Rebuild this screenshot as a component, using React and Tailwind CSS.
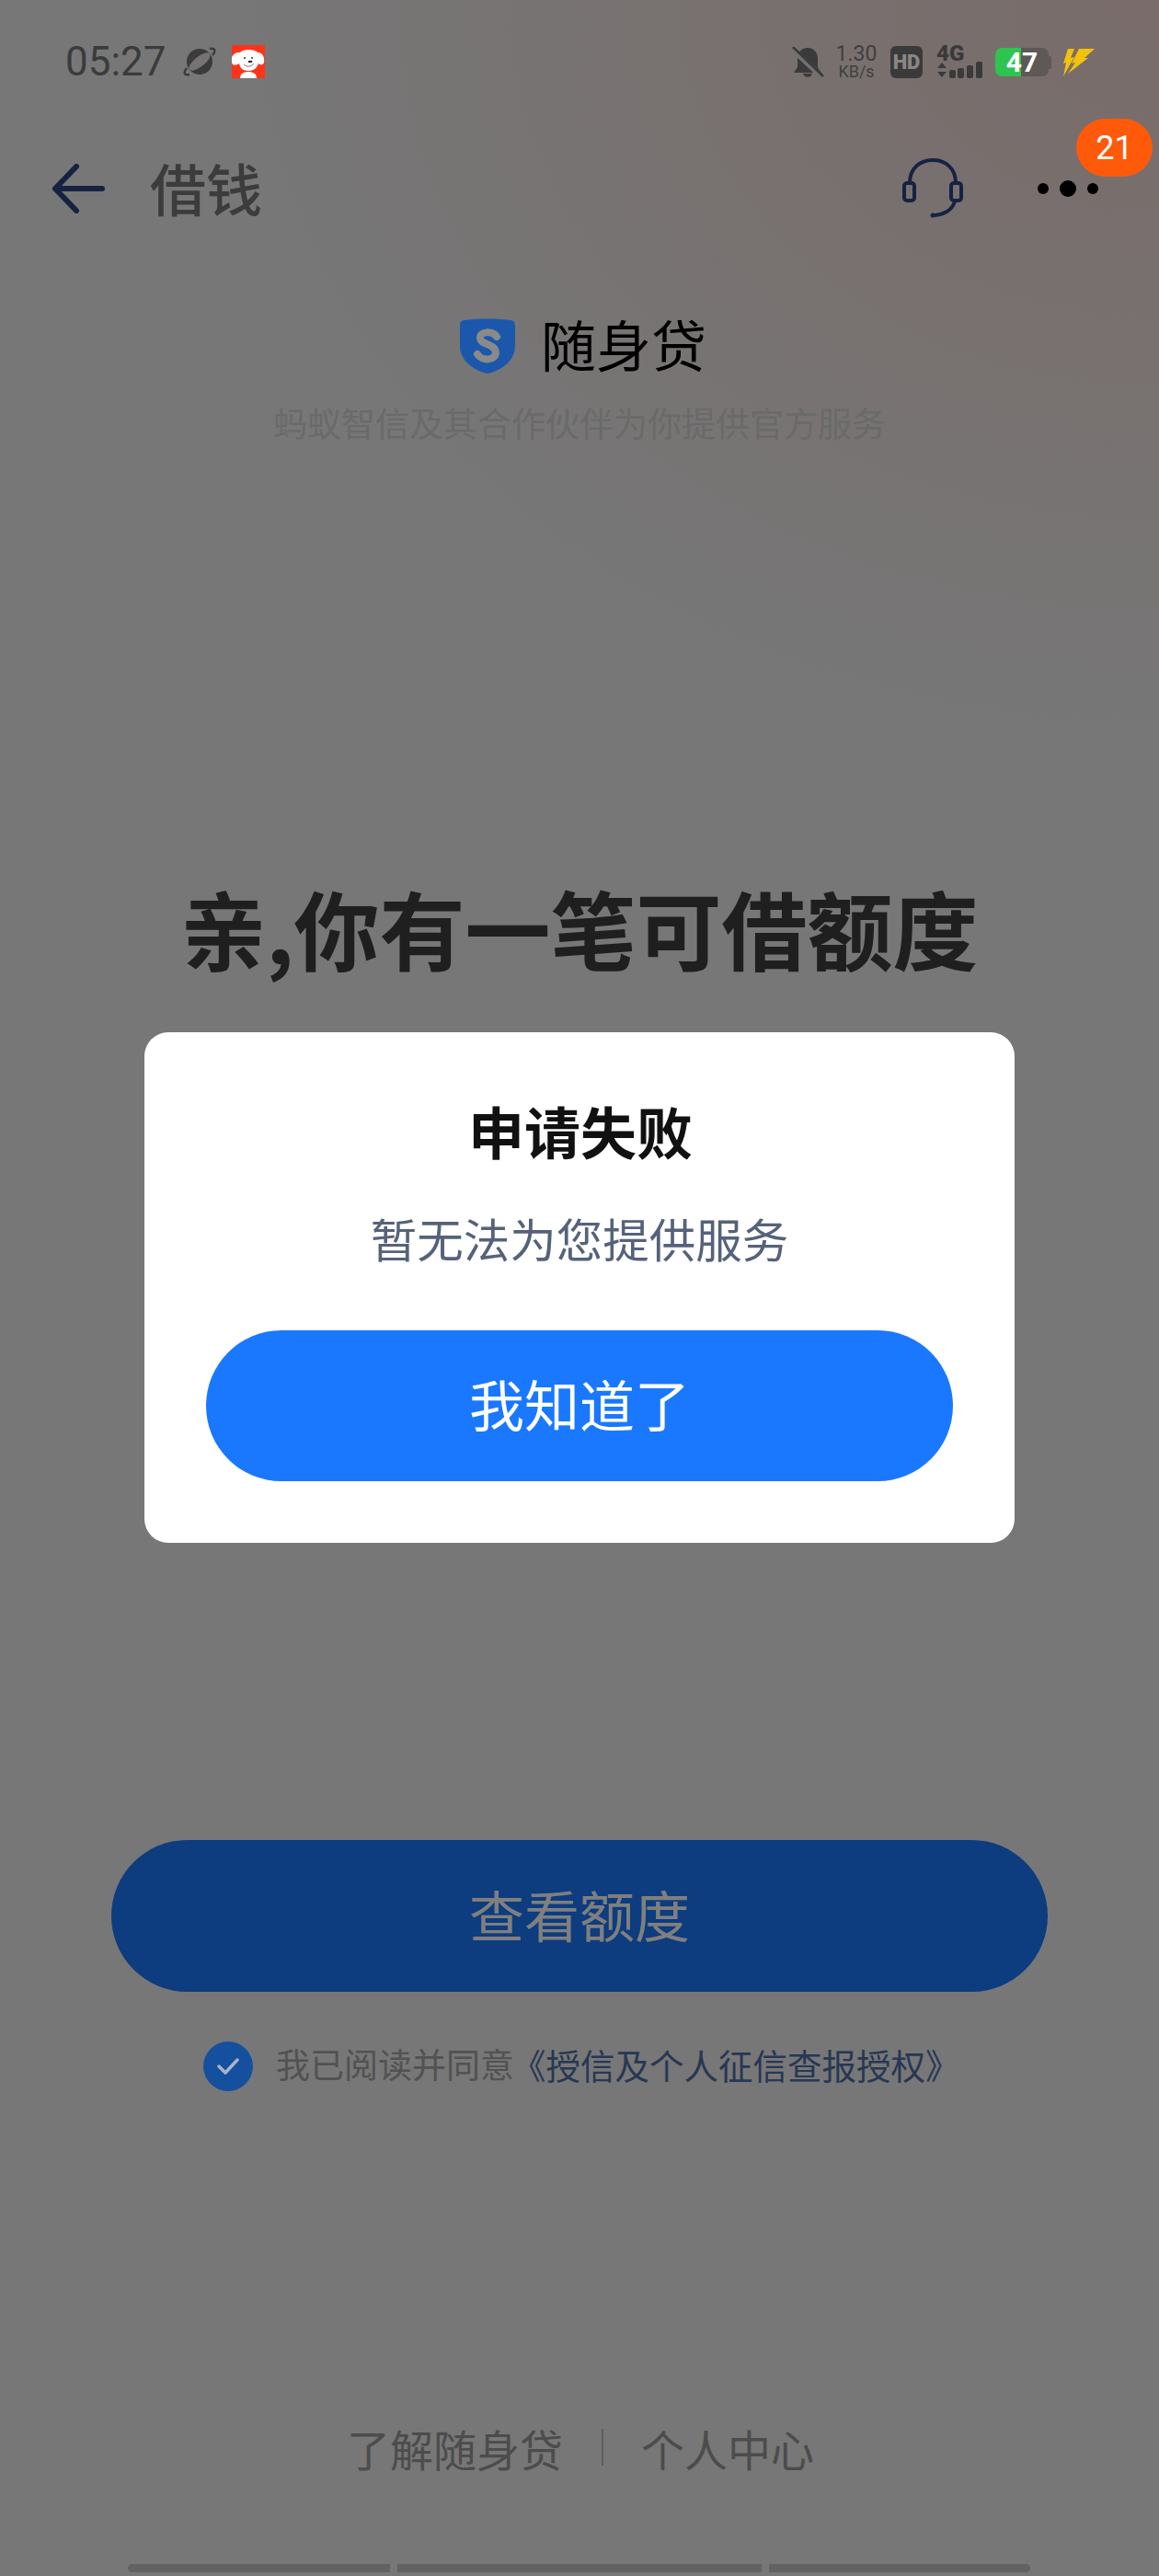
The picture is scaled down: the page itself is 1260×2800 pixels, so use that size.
import React from 'react';

const cjk = "font-['Noto_Sans_CJK_SC','Noto_Sans',sans-serif]";

function StatusBar() {
  return (
    <div className="relative z-20 flex h-[134px] items-start justify-between pt-[49px] pl-[71px] pr-[70px]">
      <div className="flex items-center">
        <span className="font-['Roboto',sans-serif] text-[44px] leading-[36px] text-[#3b3b3b]">05:27</span>
        {/* planet */}
        <svg className="ml-[18px]" width="36" height="32" viewBox="0 0 36 32">
          <circle cx="18" cy="16" r="14" fill="#3b3b3b" />
          <ellipse cx="18" cy="16" rx="14" ry="5.5" transform="rotate(-38 18 16)" fill="#777372" />
          <path d="M4 23 C0 28 1 31 7 30 M32 9 C36 4 35 1 29 2" fill="none" stroke="#3b3b3b" strokeWidth="2.5" />
        </svg>
        {/* red dog */}
        <svg className="ml-[17px]" width="36" height="36" viewBox="0 0 36 36">
          <rect width="36" height="36" fill="#ff3319" />
          <path d="M9 36 C9 31 13 29 18 29 C23 29 27 31 27 36 Z" fill="#fff" />
          <path d="M0 13 C3 8 6 8 9 8 C12 4 25 4 28 8 C32 8 36 11 35 19 C34 22 31 22 29 20 C27 26 23 28 18 28 C12 28 9 25 8 20 C5 22 1 23 0 19 Z" fill="#fff" />
          <circle cx="14" cy="14" r="1" fill="#333" />
          <circle cx="22" cy="14" r="1" fill="#333" />
          <ellipse cx="20" cy="18" rx="2.5" ry="1.2" fill="#333" />
          <path d="M13 21 C16 24 21 24 24 20" fill="none" stroke="#555" strokeWidth="0.8" />
        </svg>
      </div>
      <div className="flex items-center">
        {/* muted bell */}
        <svg width="36" height="34" viewBox="0 0 36 34">
          <path d="M18 1 C25 1 29 6 29 13 L29 22 L33 28 L3 28 L7 22 L7 13 C7 6 11 1 18 1 Z" fill="#3a3a3a" />
          <path d="M13 29 C14 34 22 34 23 29 Z" fill="#3a3a3a" />
          <path d="M1 2 L34 33" stroke="#757070" strokeWidth="6" />
          <path d="M2 0 L35 32" stroke="#3a3a3a" strokeWidth="2.5" />
        </svg>
        <div className="ml-[13px] flex w-[44px] flex-col items-center font-['Roboto',sans-serif] text-[#3f3f3f]">
          <span className="text-[23px] leading-[19px]">1.30</span>
          <span className="mt-[2px] whitespace-nowrap text-[18px] leading-[16px]">KB/s</span>
        </div>
        <div className="ml-[15px] flex h-[35px] w-[35px] items-center justify-center rounded-[6px] bg-[#3a3a3a] font-['Roboto',sans-serif] text-[22px] font-black leading-none text-[#8a8685]">HD</div>
        <div className="ml-[15px] flex w-[51px] flex-col">
          <span className="font-['Roboto',sans-serif] text-[24px] font-black leading-[17px] text-[#3a3a3a]">4G</span>
          <svg width="51" height="18" viewBox="0 0 51 18">
            <path d="M1 7 L6 1 L11 7 Z M1 11 L11 11 L6 17 Z" fill="#3a3a3a" />
            <rect x="14" y="9" width="7" height="9" rx="2" fill="#3a3a3a" />
            <rect x="23" y="7" width="7" height="11" rx="2" fill="#3a3a3a" />
            <rect x="33" y="4" width="7" height="14" rx="2" fill="#3a3a3a" />
            <rect x="43" y="0" width="7" height="18" rx="2" fill="#3a3a3a" />
          </svg>
        </div>
        <div className="relative ml-[13px] flex h-[31px] w-[58px] items-center justify-center rounded-[7px] bg-[#5e5856]">
          <div className="absolute inset-y-0 left-0 w-[28px] rounded-l-[7px] bg-[#2fc44f]" />
          <span className="relative font-['Roboto',sans-serif] text-[30px] font-bold leading-none text-white">47</span>
        </div>
        <div className="h-[14px] w-[3px] rounded-r-[2px] bg-[#5e5856]" />
        {/* charging bolts */}
        <svg className="ml-[12px]" width="35" height="32" viewBox="0 0 35 32">
          <path d="M6 1 L13 1 L9 11 L13 10 L1 31 L4 16 L1 17 Z" fill="#f2c20c" />
          <path d="M18 1 L35 1 L24 11 L28 11 L6 28 L14 16 L10 17 Z" fill="#f2c20c" />
        </svg>
      </div>
    </div>
  );
}

function NavBar() {
  return (
    <div className="relative flex h-[142px] items-center pl-[56px] pr-[66px]">
      <svg width="58" height="54" viewBox="0 0 58 54" fill="none" stroke="#2c4484" strokeWidth="6" strokeLinecap="round" strokeLinejoin="round">
        <path d="M55 27 L4 27 M27 3 L4 27 L27 51" />
      </svg>
      <span className={`${cjk} ml-[49px] pb-[4px] text-[61px] font-medium leading-none text-[#787878]`}>借钱</span>
      <svg className="ml-auto" width="66" height="66" viewBox="0 0 66 66" fill="none" stroke="#2c4484" strokeWidth="4" strokeLinecap="round">
        <path d="M8 27 C8 10 20 2 33 2 C46 2 58 10 58 27" />
        <rect x="2" y="27" width="11" height="19" rx="3" />
        <rect x="53" y="27" width="11" height="19" rx="3" />
        <path d="M57 47 C54 57 44 62 33 62" />
        <circle cx="33" cy="62" r="2.5" fill="#2c4484" stroke="none" />
      </svg>
      <div className="ml-[81px] flex items-center gap-[12px]">
        <span className="h-[12px] w-[12px] rounded-full bg-black" />
        <span className="h-[18px] w-[18px] rounded-full bg-black" />
        <span className="h-[12px] w-[12px] rounded-full bg-black" />
      </div>
      <div className="absolute right-[7px] top-[-5px] z-20 flex h-[63px] w-[83px] items-center justify-center rounded-full bg-[#ff5a0a] font-['Roboto',sans-serif] text-[36px] leading-none text-white">21</div>
    </div>
  );
}

export default function App() {
  return (
    <div className={`${cjk} relative h-[2800px] w-[1260px] overflow-hidden bg-[#eeeeee] bg-[radial-gradient(ellipse_1000px_800px_at_top_right,#f2d8d4_0%,#eeeeee_100%)]`}>
      <StatusBar />
      <NavBar />

      <div className="mt-[70px] flex h-[60px] items-center pl-[499px]">
        <svg className="relative z-20" width="62" height="60" viewBox="0 0 62 60">
          <path d="M1 8 C1 4 3 2 7 2 C20 0 42 0 55 2 C59 2 61 4 61 8 L61 30 C61 46 46 57 31 60 C16 57 1 46 1 30 Z" fill="#1b58ac" />
          <path d="M41 20 C36 13 22 14 23 22 C24 29 39 27 40 37 C40 46 25 47 20 39" fill="none" stroke="#8a8a8a" strokeWidth="8" strokeLinecap="round" />
        </svg>
        <span className="ml-[27px] pb-[6px] text-[60px] leading-none text-black">随身贷</span>
      </div>
      <p className="mt-[30px] text-center text-[37px] leading-[46px] text-[#d4d4d4]">蚂蚁智信及其合作伙伴为你提供官方服务</p>

      <h1 className="mt-[471px] text-center text-[93px] font-bold leading-[110px] text-[#3e3e3e]">亲,你有一笔可借额度</h1>

      <div className="mx-[121px] mt-[937px] flex h-[165px] items-center justify-center rounded-full bg-[#1a78ff] pb-[6px] text-[60px] text-white">查看额度</div>

      <div className="mt-[53px] flex h-[56px] items-center pl-[221px]">
        <span className="relative z-20 flex h-[54px] w-[54px] items-center justify-center rounded-full bg-[#14509e]">
          <svg width="26" height="22" viewBox="0 0 26 22" fill="none" stroke="#a8b4c8" strokeWidth="3.5" strokeLinecap="round" strokeLinejoin="round">
            <path d="M3 11 L10 18 L23 4" />
          </svg>
        </span>
        <span className="ml-[25px] pb-[5px] text-[37px] leading-none text-[#a4a4a4]">我已阅读并同意</span>
        <span className="ml-[-3px] pb-[5px] text-[37.5px] leading-none text-[#4f6fa8]">《授信及个人征信查报授权》</span>
      </div>

      <div className="mt-[356px] flex h-[60px] items-center pl-[377px] text-[47px] leading-none text-[#989898]">
        <span>了解随身贷</span>
        <span className="ml-[42px] h-[40px] w-[2px] bg-[#bcbcbc]" />
        <span className="ml-[41px]">个人中心</span>
      </div>

      <div className="ml-[139px] mt-[97px] flex h-[9px] w-[981px] gap-[8px]">
        <div className="w-[285px] rounded-l-full bg-[#c4c4c4]" />
        <div className="w-[396px] bg-[#c4c4c4]" />
        <div className="w-[284px] rounded-r-full bg-[#c4c4c4]" />
      </div>

      {/* dialog */}
      <div className="absolute inset-0 z-10 flex items-start justify-center bg-black/50 pt-[1122px]">
        <div className="flex h-[555px] w-[946px] flex-col items-center rounded-[26px] bg-white">
          <h2 className="mt-[73px] pl-[2px] text-[61px] font-bold leading-[68px] text-[#111]">申请失败</h2>
          <p className="mt-[52px] text-[50.5px] leading-[60px] text-[#55627a]">暂无法为您提供服务</p>
          <button className="mt-[71px] flex h-[164px] w-[812px] items-center justify-center rounded-full bg-[#1a78ff] pb-[6px] text-[60px] text-white">我知道了</button>
        </div>
      </div>
    </div>
  );
}
